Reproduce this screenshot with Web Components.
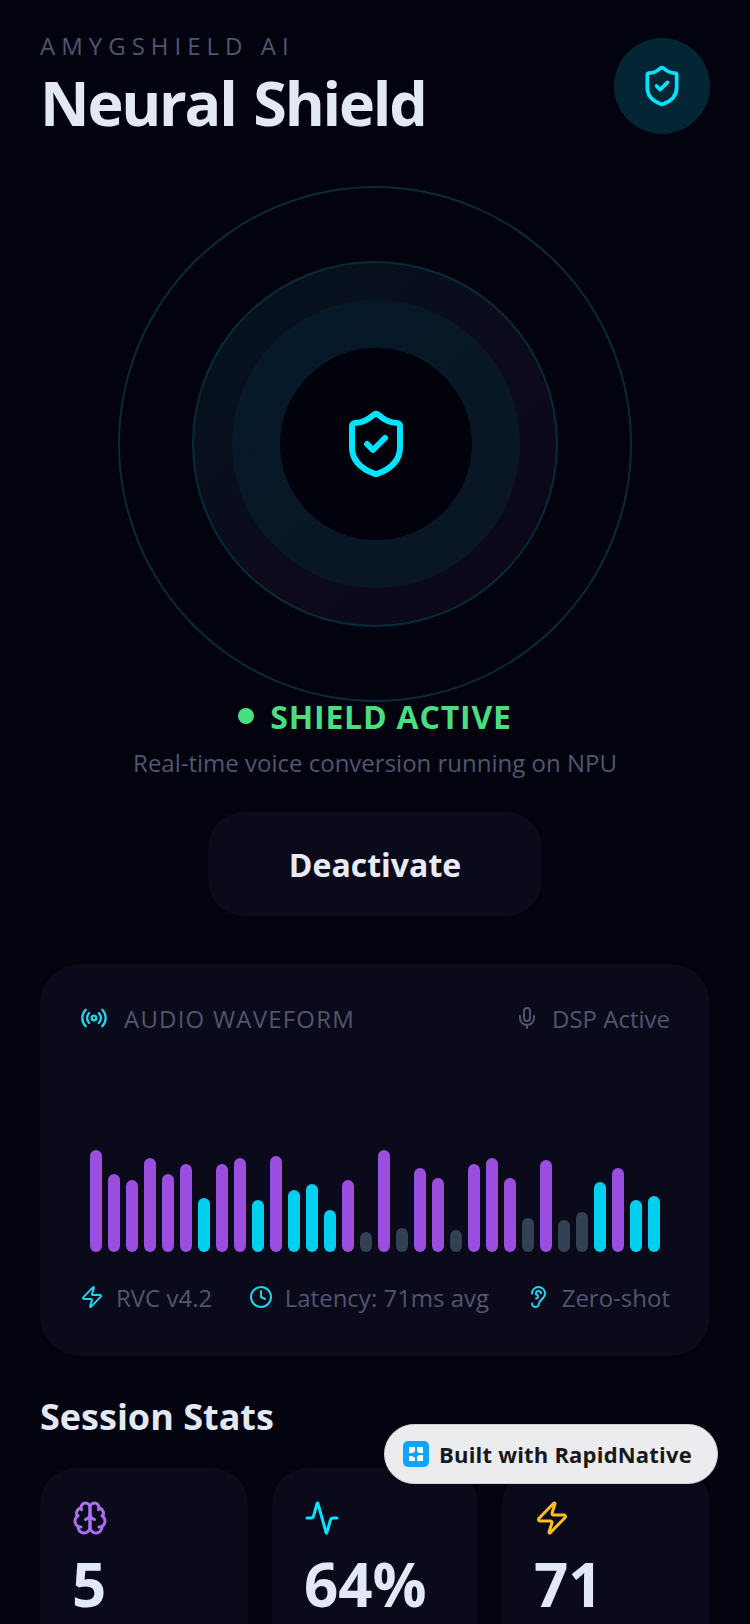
<!DOCTYPE html>
<html lang="en">
<head>
<meta charset="utf-8">
<title>Neural Shield</title>
<style>
  html, body {
    margin: 0;
    height: 1624px;
    overflow: hidden;
    background: #03030f;
    font-family: "Open Sans", "Liberation Sans", sans-serif;
  }
</style>
</head>
<body>
<neural-shield-app></neural-shield-app>

<script>
const ICONS = {
  shield: `<path d="M20 13c0 5-3.5 7.5-7.66 8.95a1 1 0 0 1-.67-.01C7.5 20.5 4 18 4 13V6a1 1 0 0 1 1-1c2 0 4.5-1.2 6.24-2.72a1.17 1.17 0 0 1 1.52 0C14.51 3.81 17 5 19 5a1 1 0 0 1 1 1z"/><path d="m9 12 2 2 4-4"/>`,
  radio: `<path d="M4.9 19.1C1 15.2 1 8.8 4.9 4.9"/><path d="M7.8 16.2c-2.3-2.3-2.3-6.1 0-8.5"/><circle cx="12" cy="12" r="2"/><path d="M16.2 7.8c2.3 2.3 2.3 6.1 0 8.5"/><path d="M19.1 4.9C23 8.8 23 15.1 19.1 19"/>`,
  mic: `<path d="M12 2a3 3 0 0 0-3 3v7a3 3 0 0 0 6 0V5a3 3 0 0 0-3-3Z"/><path d="M19 10v2a7 7 0 0 1-14 0v-2"/><line x1="12" x2="12" y1="19" y2="22"/>`,
  zap: `<path d="M4 14a1 1 0 0 1-.78-1.63l9.9-10.2a.5.5 0 0 1 .86.46l-1.92 6.02A1 1 0 0 0 13 10h7a1 1 0 0 1 .78 1.63l-9.9 10.2a.5.5 0 0 1-.86-.46l1.92-6.02A1 1 0 0 0 11 14z"/>`,
  clock: `<circle cx="12" cy="12" r="10"/><polyline points="12 6 12 12 16 14"/>`,
  ear: `<path d="M6 8.5a6.5 6.5 0 1 1 13 0c0 6-6 6-6 10a3.5 3.5 0 1 1-7 0"/><path d="M15 8.5a2.5 2.5 0 0 0-5 0v1a2 2 0 1 1 0 4"/>`,
  brain: `<path d="M12 5a3 3 0 1 0-5.997.125 4 4 0 0 0-2.526 5.77 4 4 0 0 0 .556 6.588A4 4 0 1 0 12 18Z"/><path d="M12 5a3 3 0 1 1 5.997.125 4 4 0 0 1 2.526 5.77 4 4 0 0 1-.556 6.588A4 4 0 1 1 12 18Z"/><path d="M15 13a4.5 4.5 0 0 1-3-4 4.5 4.5 0 0 1-3 4"/><path d="M17.599 6.5a3 3 0 0 0 .399-1.375"/><path d="M6.003 5.125A3 3 0 0 0 6.401 6.5"/><path d="M3.477 10.896a4 4 0 0 1 .585-.396"/><path d="M19.938 10.5a4 4 0 0 1 .585.396"/><path d="M6 18a4 4 0 0 1-1.967-.516"/><path d="M19.967 17.484A4 4 0 0 1 18 18"/>`,
  activity: `<path d="M22 12h-2.48a2 2 0 0 0-1.93 1.46l-2.35 8.36a.25.25 0 0 1-.48 0L9.24 2.18a.25.25 0 0 0-.48 0l-2.35 8.36A2 2 0 0 1 4.49 12H2"/>`
};

/**
 * Base class: attaches the open shadow root and writes the markup once.
 */
class ShadowElement extends HTMLElement {
  constructor() {
    super();
    this.attachShadow({ mode: "open" });
  }

  connectedCallback() {
    this.shadowRoot.innerHTML = this.render();
  }
}

/**
 * Stroke icon. Attributes: name, size, color.
 */
class NsIcon extends ShadowElement {
  render() {
    const size = this.getAttribute("size") || 24;
    const color = this.getAttribute("color") || "currentColor";
    return `
      <style>
        :host { display: block; flex: none; width: ${size}px; height: ${size}px; }
        svg { display: block; }
      </style>
      <svg xmlns="http://www.w3.org/2000/svg" width="${size}" height="${size}" viewBox="0 0 24 24" fill="none"
        stroke="${color}" stroke-width="2" stroke-linecap="round" stroke-linejoin="round">
        ${ICONS[this.getAttribute("name")]}
      </svg>
    `;
  }
}

class NsHeader extends ShadowElement {
  render() {
    return `
      <style>
        :host {
          display: flex;
          justify-content: space-between;
          align-items: flex-start;
          height: 148px;
          padding: 0 40px;
        }
        .eyebrow {
          margin-top: 31px;
          font-size: 24px;
          line-height: 30px;
          letter-spacing: 6px;
          color: #505670;
        }
        h1 {
          margin: 4px 0 0;
          font-size: 61px;
          line-height: 76px;
          font-weight: 700;
          letter-spacing: -2.2px;
          word-spacing: 4px;
          color: #e2e8f5;
        }
        .badge {
          display: flex;
          align-items: center;
          justify-content: center;
          width: 96px;
          height: 96px;
          margin-top: 38px;
          border-radius: 50%;
          background: #032534;
        }
      </style>
      <div>
        <div class="eyebrow">AMYGSHIELD AI</div>
        <h1>Neural Shield</h1>
      </div>
      <div class="badge"><ns-icon name="shield" size="44" color="#00e5ff"></ns-icon></div>
    `;
  }
}

/**
 * Concentric rings with the shield in the middle.
 */
class ShieldOrb extends ShadowElement {
  render() {
    return `
      <style>
        :host {
          display: flex;
          justify-content: center;
          margin-top: 38px;
        }
        .ring {
          display: flex;
          align-items: center;
          justify-content: center;
          box-sizing: border-box;
          border-radius: 50%;
        }
        .outer {
          width: 514px;
          height: 516px;
          border: 2px solid #072c38;
        }
        .mid {
          width: 366px;
          height: 366px;
          border: 2px solid #072c38;
          background: linear-gradient(135deg, #04141f 0%, #0d0a1b 60%, #0b0718 100%);
        }
        .inner {
          width: 288px;
          height: 288px;
          margin-left: 2px;
          background: linear-gradient(135deg, #051a2a 0%, #0a1523 100%);
        }
        .core {
          width: 192px;
          height: 192px;
          background: #02020d;
        }
      </style>
      <div class="ring outer">
        <div class="ring mid">
          <div class="ring inner">
            <div class="ring core"><ns-icon name="shield" size="72" color="#00e5ff"></ns-icon></div>
          </div>
        </div>
      </div>
    `;
  }
}

class ShieldStatus extends ShadowElement {
  render() {
    return `
      <style>
        :host {
          display: flex;
          flex-direction: column;
          align-items: center;
        }
        .state {
          display: flex;
          align-items: center;
          gap: 16px;
          height: 40px;
          margin-top: -6px;
          font-size: 32px;
          font-weight: 700;
          letter-spacing: .8px;
          color: #4ade80;
        }
        .dot {
          width: 16px;
          height: 16px;
          border-radius: 50%;
          background: #4ade80;
        }
        .note {
          margin-top: 9px;
          font-size: 24px;
          line-height: 36px;
          color: #505670;
        }
        .deactivate {
          display: flex;
          align-items: center;
          justify-content: center;
          width: 334px;
          height: 104px;
          margin-top: 31px;
          border-radius: 36px;
          background: #0a0a1a;
          font-size: 32px;
          font-weight: 700;
          color: #e8eaf6;
        }
      </style>
      <div class="state"><span class="dot"></span>SHIELD ACTIVE</div>
      <div class="note">Real-time voice conversion running on NPU</div>
      <div class="deactivate">Deactivate</div>
    `;
  }
}

const BARS = [
  [102, "p"], [78, "p"], [72, "p"], [94, "p"], [78, "p"], [88, "p"], [54, "c"], [88, "p"],
  [94, "p"], [52, "c"], [96, "p"], [62, "c"], [68, "c"], [42, "c"], [72, "p"], [20, "g"],
  [102, "p"], [24, "g"], [84, "p"], [74, "p"], [22, "g"], [88, "p"], [94, "p"], [74, "p"],
  [34, "g"], [92, "p"], [32, "g"], [40, "g"], [70, "c"], [84, "p"], [52, "c"], [56, "c"]
];

class WaveformCard extends ShadowElement {
  render() {
    const bars = BARS.map(([h, tone]) => `<i class="${tone}" style="height:${h}px"></i>`).join("");
    return `
      <style>
        :host {
          display: block;
          box-sizing: border-box;
          height: 392px;
          margin: 48px 40px 0;
          padding: 37px 40px 0;
          border-radius: 40px;
          background: #0a0a1a;
          color: #505670;
          font-size: 24px;
        }
        .top, .foot {
          display: flex;
          justify-content: space-between;
          align-items: center;
          height: 34px;
        }
        .side { display: flex; align-items: center; gap: 13px; }
        .title { margin-left: 3px; letter-spacing: 1.2px; }
        .bars {
          display: flex;
          justify-content: center;
          align-items: flex-end;
          gap: 6px;
          height: 102px;
          margin-top: 115px;
        }
        .bars i { display: block; width: 12px; border-radius: 6px; }
        .p { background: #9b4de0; }
        .c { background: #00cfee; }
        .g { background: #334155; }
        .foot { margin-top: 28px; }
        .foot .side { gap: 12px; }
      </style>
      <div class="top">
        <div class="side"><ns-icon name="radio" size="28" color="#22d3ee"></ns-icon><span class="title">AUDIO WAVEFORM</span></div>
        <div class="side"><ns-icon name="mic" size="24" color="#505670"></ns-icon><span>DSP Active</span></div>
      </div>
      <div class="bars">${bars}</div>
      <div class="foot">
        <div class="side"><ns-icon name="zap" size="24" color="#22d3ee"></ns-icon><span>RVC v4.2</span></div>
        <div class="side"><ns-icon name="clock" size="24" color="#22d3ee"></ns-icon><span>Latency: 71ms avg</span></div>
        <div class="side"><ns-icon name="ear" size="24" color="#22d3ee"></ns-icon><span>Zero-shot</span></div>
      </div>
    `;
  }
}

class StatCard extends ShadowElement {
  render() {
    return `
      <style>
        :host {
          display: block;
          box-sizing: border-box;
          height: 240px;
          padding: 32px 32px 0;
          border-radius: 36px;
          background: #0a0a1a;
        }
        .value {
          margin-top: 7px;
          font-size: 60px;
          line-height: 82px;
          font-weight: 700;
          color: #e2e8f5;
        }
      </style>
      <ns-icon name="${this.getAttribute("icon")}" size="36" color="${this.getAttribute("color")}"></ns-icon>
      <div class="value">${this.getAttribute("value")}</div>
    `;
  }
}

class SessionStats extends ShadowElement {
  render() {
    return `
      <style>
        :host { display: block; margin: 37px 40px 0; }
        h2 {
          margin: 0;
          font-size: 36px;
          line-height: 48px;
          font-weight: 700;
          color: #e2e8f5;
        }
        .grid {
          display: grid;
          grid-template-columns: 208px 206px 208px;
          gap: 24px;
          margin-top: 27px;
        }
      </style>
      <h2>Session Stats</h2>
      <div class="grid">
        <stat-card icon="brain" color="#a970f0" value="5"></stat-card>
        <stat-card icon="activity" color="#00e5ff" value="64%"></stat-card>
        <stat-card icon="zap" color="#fbbf24" value="71"></stat-card>
      </div>
    `;
  }
}

/**
 * Floating "Built with" pill, sits over the stats.
 */
class BuiltWithBadge extends ShadowElement {
  render() {
    return `
      <style>
        :host {
          position: absolute;
          left: 384px;
          top: 1424px;
          display: flex;
          align-items: center;
          gap: 10px;
          box-sizing: border-box;
          width: 334px;
          height: 60px;
          padding-left: 18px;
          border-radius: 30px;
          border: 1px solid #d4d4d8;
          background: #ececee;
          font-size: 22px;
          font-weight: 700;
          letter-spacing: .2px;
          color: #18181b;
        }
        svg { display: block; flex: none; }
      </style>
      <svg width="26" height="26" viewBox="0 0 26 26">
        <rect width="26" height="26" rx="5" fill="#0ea5ff"/>
        <path d="M6 6h6v4l-2 2H6zM14 6h6v6h-4l-2-2zM6 15h3l3 2v3H6zM16 14h4v6h-6v-4z" fill="#fff"/>
      </svg>
      <span>Built with RapidNative</span>
    `;
  }
}

class NeuralShieldApp extends ShadowElement {
  render() {
    return `
      <style>
        :host {
          display: block;
          height: 1624px;
          overflow: hidden;
          color: #e2e8f5;
        }
      </style>
      <ns-header></ns-header>
      <shield-orb></shield-orb>
      <shield-status></shield-status>
      <waveform-card></waveform-card>
      <session-stats></session-stats>
      <built-with-badge></built-with-badge>
    `;
  }
}

customElements.define("ns-icon", NsIcon);
customElements.define("ns-header", NsHeader);
customElements.define("shield-orb", ShieldOrb);
customElements.define("shield-status", ShieldStatus);
customElements.define("waveform-card", WaveformCard);
customElements.define("stat-card", StatCard);
customElements.define("session-stats", SessionStats);
customElements.define("built-with-badge", BuiltWithBadge);
customElements.define("neural-shield-app", NeuralShieldApp);
</script>
</body>
</html>
